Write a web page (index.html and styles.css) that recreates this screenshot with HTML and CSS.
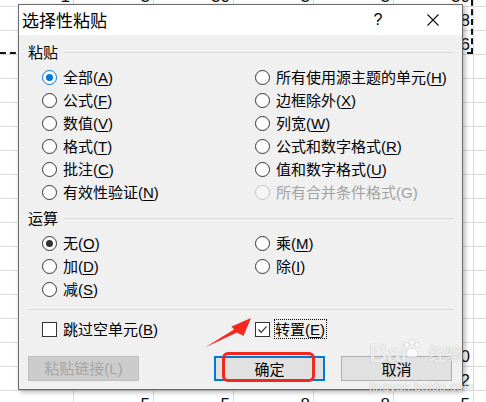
FILE: index.html
```html
<!DOCTYPE html>
<html lang="zh-CN">
<head>
<meta charset="utf-8">
<title>选择性粘贴</title>
<link rel="stylesheet" href="styles.css">
</head>
<body>
<div class="sheet">
  <div>1</div><div>3</div><div>30</div><div>3</div><div>3</div><div>30</div><div></div>
  <div></div><div></div><div></div><div></div><div></div><div>8</div><div></div>
  <div></div><div></div><div></div><div></div><div></div><div>6</div><div></div>
  <div></div><div></div><div></div><div></div><div></div><div></div><div></div>
  <div></div><div></div><div></div><div></div><div></div><div></div><div></div>
  <div></div><div></div><div></div><div></div><div></div><div></div><div></div>
  <div></div><div></div><div></div><div></div><div></div><div></div><div></div>
  <div></div><div></div><div></div><div></div><div></div><div></div><div></div>
  <div></div><div></div><div></div><div></div><div></div><div></div><div></div>
  <div></div><div></div><div></div><div></div><div></div><div></div><div></div>
  <div></div><div></div><div></div><div></div><div></div><div></div><div></div>
  <div></div><div></div><div></div><div></div><div></div><div></div><div></div>
  <div></div><div></div><div></div><div></div><div></div><div></div><div></div>
  <div></div><div></div><div></div><div></div><div></div><div></div><div></div>
  <div></div><div></div><div></div><div></div><div></div><div></div><div></div>
  <div></div><div></div><div></div><div></div><div></div><div>10</div><div></div>
  <div></div><div></div><div></div><div></div><div></div><div>12</div><div></div>
  <div></div><div>5</div><div>5</div><div>8</div><div>8</div><div>5</div><div></div>
</div>
<div class="copy-range"></div>

<div class="dialog">
  <div class="titlebar">
    <span class="title">选择性粘贴</span>
    <span class="help">?</span>
    <span class="close"><svg width="12" height="12" viewBox="0 0 12 12"><path d="M0.5 0.5L11.5 11.5M11.5 0.5L0.5 11.5" stroke="#111" stroke-width="1.1" fill="none"/></svg></span>
  </div>
  <div class="content">
    <div class="group-head"><span>粘贴</span><i class="rule"></i></div>
    <div class="options six">
      <label class="opt"><span class="radio on blue"></span><span>全部<span class="k">(<u>A</u>)</span></span></label>
      <label class="opt"><span class="radio"></span><span>公式<span class="k">(<u>F</u>)</span></span></label>
      <label class="opt"><span class="radio"></span><span>数值<span class="k">(<u>V</u>)</span></span></label>
      <label class="opt"><span class="radio"></span><span>格式<span class="k">(<u>T</u>)</span></span></label>
      <label class="opt"><span class="radio"></span><span>批注<span class="k">(<u>C</u>)</span></span></label>
      <label class="opt"><span class="radio"></span><span>有效性验证<span class="k">(<u>N</u>)</span></span></label>
      <label class="opt"><span class="radio"></span><span>所有使用源主题的单元<span class="k">(<u>H</u>)</span></span></label>
      <label class="opt"><span class="radio"></span><span>边框除外<span class="k">(<u>X</u>)</span></span></label>
      <label class="opt"><span class="radio"></span><span>列宽<span class="k">(<u>W</u>)</span></span></label>
      <label class="opt"><span class="radio"></span><span>公式和数字格式<span class="k">(<u>R</u>)</span></span></label>
      <label class="opt"><span class="radio"></span><span>值和数字格式<span class="k">(<u>U</u>)</span></span></label>
      <label class="opt disabled"><span class="radio"></span><span>所有合并条件格式<span class="k">(G)</span></span></label>
    </div>

    <div class="group-head second"><span>运算</span><i class="rule"></i></div>
    <div class="options three">
      <label class="opt"><span class="radio on"></span><span>无<span class="k">(<u>O</u>)</span></span></label>
      <label class="opt"><span class="radio"></span><span>加<span class="k">(<u>D</u>)</span></span></label>
      <label class="opt"><span class="radio"></span><span>减<span class="k">(<u>S</u>)</span></span></label>
      <label class="opt"><span class="radio"></span><span>乘<span class="k">(<u>M</u>)</span></span></label>
      <label class="opt"><span class="radio"></span><span>除<span class="k">(<u>I</u>)</span></span></label>
    </div>

    <div class="sep"></div>

    <div class="checks">
      <label class="opt"><span class="box"></span><span>跳过空单元<span class="k">(<u>B</u>)</span></span></label>
      <label class="opt tight"><span class="box"><svg width="13" height="13" viewBox="0 0 13 13"><path d="M2.5 6.5L5.2 9.3L10.6 3.4" stroke="#333" stroke-width="1.2" fill="none"/></svg></span><span class="focus">转置<span class="k">(<u>E</u>)</span></span></label>
    </div>

    <div class="buttons">
      <span class="btn disabled"><span>粘贴链接<span class="k">(L)</span></span></span>
      <span class="btn default">确定</span>
      <span class="btn">取消</span>
    </div>
  </div>
</div>

<div class="redbox"></div>
<svg class="arrow" width="486" height="402" viewBox="0 0 486 402">
  <polygon points="205,347.5 234,329.5 231.5,326.5 251,318 243.5,336 237,332.5" fill="#f42a22"/>
</svg>

<div class="wm">
  <div class="wm-top"><span class="wm-b">Bai</span><svg class="paw" width="20" height="20" viewBox="0 0 20 20"><g fill="rgba(255,255,255,0.75)" stroke="rgba(0,0,0,0.15)" stroke-width="0.6"><ellipse cx="5" cy="6" rx="2.2" ry="2.8"/><ellipse cx="10" cy="3.5" rx="2.2" ry="2.8"/><ellipse cx="15" cy="6" rx="2.2" ry="2.8"/><path d="M4 16c0-4 3-7 6-7s6 3 6 7c0 2-3 2-6 2s-6 0-6-2z"/></g></svg><span class="wm-cn">经验</span></div>
  <div class="wm-url">jingyan.baidu.com</div>
</div>
</body>
</html>
```

FILE: styles.css
```css
* { box-sizing: border-box; }
html, body { margin: 0; padding: 0; }
body {
  width: 486px;
  height: 402px;
  overflow: hidden;
  position: relative;
  background: #fff;
  font-family: "Noto Sans CJK SC", sans-serif;
  color: #000;
  text-autospace: no-autospace;
}

/* spreadsheet behind */
.sheet {
  display: grid;
  grid-template-columns: repeat(7, 80px);
  grid-auto-rows: 24px;
  margin: -17px 0 0 -6px;
  font-family: "Liberation Sans", sans-serif;
  font-size: 17px;
  color: #111;
}
.sheet div {
  border-right: 1px solid #dadada;
  border-bottom: 1px solid #dadada;
  text-align: right;
  padding: 4px 3px 0 0;
  line-height: 20px;
  overflow: hidden;
}
.copy-range {
  position: absolute;
  left: -10px;
  top: -10px;
  width: 483px;
  height: 64px;
  border: 2px dashed #111;
}

/* dialog */
.dialog {
  position: absolute;
  left: 18px;
  top: 4px;
  width: 445px;
  height: 386px;
  border: 1px solid #6a6a6a;
  background: #f0f0f0;
  box-shadow: 2px 2px 5px rgba(0, 0, 0, 0.3);
  display: flex;
  flex-direction: column;
}
.titlebar {
  height: 30px;
  flex: none;
  background: #fff;
  display: flex;
  align-items: center;
}
.title {
  padding-left: 3px;
  font-size: 17px;
  line-height: 20px;
}
.help {
  margin-left: auto;
  width: 28px;
  text-align: center;
  font-family: "Liberation Sans", sans-serif;
  font-size: 16px;
  line-height: 20px;
}
.close {
  width: 46px;
  margin: 0 6px 0 18px;
  display: flex;
  justify-content: center;
}

.content {
  padding: 7px 8px 0 9px;
  font-size: 15px;
  line-height: 18px;
}
.k {
  font-family: "Liberation Sans", sans-serif;
  font-size: 15px;
}
.k u { text-underline-offset: 2px; }
.group-head {
  display: flex;
  align-items: center;
  gap: 6px;
  height: 20px;
  font-size: 15px;
}
.group-head.second { margin-top: 4px; }
.group-head .rule {
  flex: 1;
  height: 1px;
  background: #dcdcdc;
}
.options {
  display: grid;
  grid-template-columns: 213px 1fr;
  grid-template-rows: repeat(6, 23px);
  grid-auto-flow: column;
  padding-left: 14px;
  margin-top: 4px;
}
.options.three { grid-template-rows: repeat(3, 23px); }
.opt {
  display: flex;
  align-items: center;
  gap: 6px;
  white-space: nowrap;
}
.opt.disabled { color: #a2a2a2; }

.radio {
  flex: none;
  position: relative;
  width: 15px;
  height: 15px;
  border: 1px solid #333;
  border-radius: 50%;
  background: #fff;
}
.radio.on::after {
  content: "";
  position: absolute;
  left: 3px;
  top: 3px;
  width: 7px;
  height: 7px;
  border-radius: 50%;
  background: #333;
}
.radio.blue { border-color: #0078d7; }
.radio.blue::after { background: #0078d7; }
.opt.disabled .radio { border-color: #c4c4c4; background: #f6f6f6; }

.sep {
  height: 1px;
  background: #dcdcdc;
  margin-top: 8px;
}
.checks {
  display: grid;
  grid-template-columns: 213px 1fr;
  padding-left: 14px;
  margin-top: 9px;
  height: 20px;
}
.box {
  flex: none;
  width: 15px;
  height: 15px;
  border: 1px solid #333;
  background: #fff;
  display: flex;
  align-items: center;
  justify-content: center;
}
.opt.tight { gap: 4px; }
.focus {
  border: 1px dotted #000;
  padding: 0 1px 0 0;
  line-height: 17px;
}

.buttons {
  display: flex;
  gap: 16px;
  margin-top: 17px;
  padding-right: 2px;
}
.btn {
  width: 111px;
  height: 25px;
  border: 1px solid #adadad;
  background: #e1e1e1;
  display: flex;
  align-items: center;
  justify-content: center;
  font-size: 15px;
  line-height: 18px;
}
.btn.disabled {
  margin-right: auto;
  background: #cccccc;
  border-color: #bfbfbf;
  color: #a6a6a6;
}
.btn.default { border: 2px solid #0078d7; }

/* annotations */
.redbox {
  position: absolute;
  left: 222px;
  top: 352px;
  width: 93px;
  height: 30px;
  border: 3px solid #f0281f;
  border-radius: 6px;
}
.arrow {
  position: absolute;
  left: 0;
  top: 0;
  pointer-events: none;
}

.wm {
  position: absolute;
  left: 369px;
  top: 340px;
  color: rgba(255, 255, 255, 0.8);
  text-shadow: 0 0 1px rgba(0, 0, 0, 0.3);
}
.wm-top {
  display: flex;
  align-items: center;
  height: 26px;
}
.wm-b {
  font-family: "Liberation Sans", sans-serif;
  font-weight: bold;
  font-size: 26px;
  letter-spacing: -1px;
  line-height: 26px;
}
.paw { margin: -8px 0 0 -4px; }
.wm-cn {
  margin-left: 6px;
  font-size: 17px;
  font-weight: bold;
  line-height: 20px;
}
.wm-url {
  margin-top: 14px;
  font-family: "Liberation Sans", sans-serif;
  font-size: 12px;
  line-height: 14px;
  letter-spacing: 0.5px;
}
```
